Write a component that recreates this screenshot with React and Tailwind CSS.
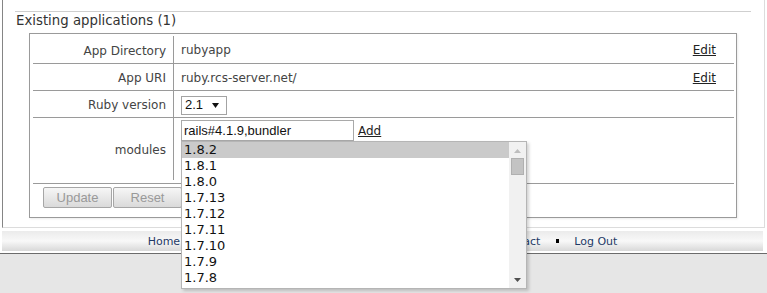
import React from "react";

const versions = ["1.8.2", "1.8.1", "1.8.0", "1.7.13", "1.7.12", "1.7.11", "1.7.10", "1.7.9", "1.7.8"];
const footerLinks = ["Home", "Applications", "Databases", "Help Desk", "Contact", "Log Out"];

function Row({ label, children, className = "", labelClass = "" }) {
  return (
    <div className={"flex border-b border-[#9a9a9a] " + className}>
      <div className={"w-[141px] shrink-0 border-r border-[#9a9a9a] flex items-center justify-end pr-[7px] pt-[2px] " + labelClass}>
        {label}
      </div>
      <div className="flex-1 flex items-center pl-[7px] pr-[18px] pt-[2px]">{children}</div>
    </div>
  );
}

function VersionList() {
  return (
    <div className="absolute left-0 top-[21px] z-10 w-[346px] h-[148px] bg-white border border-[#b5b5b5] shadow-[2px_2px_3px_rgba(0,0,0,0.18)] flex">
      <div className="flex-1 overflow-hidden font-['DejaVu_Sans',sans-serif] text-[13px] leading-[16px] text-[#111]">
        {versions.map((v, i) => (
          <div key={v} className={"h-[16px] pl-[2px] " + (i === 0 ? "bg-[#cacaca]" : "")}>
            {v}
          </div>
        ))}
      </div>
      <div className="w-[17px] shrink-0 bg-[#f1f1f1] flex flex-col items-center">
        <svg width="7" height="4" viewBox="0 0 7 4" className="mt-[7px]">
          <path d="M0 4 L3.5 0 L7 4 Z" fill="#bdbdbd" />
        </svg>
        <div className="mt-[5px] w-[13px] h-[17px] bg-[#c3c3c3] border border-[#b0b0b0]" />
        <div className="flex-1" />
        <svg width="7" height="4" viewBox="0 0 7 4" className="mb-[6px]">
          <path d="M0 0 L7 0 L3.5 4 Z" fill="#505050" />
        </svg>
      </div>
    </div>
  );
}

export default function App() {
  return (
    <div className="w-[767px] h-[293px] bg-white flex flex-col overflow-hidden font-['DejaVu_Sans',sans-serif] text-[12px] text-[#444]">
      <div className="ml-[2px] w-[763px] h-[228px] shrink-0 border-l border-l-[#858585] border-r border-r-[#dcdcdc] border-b border-b-[#dcdcdc]">
        <div className="mt-[11px] ml-[12px] w-[736px] border-t border-[#cfcfcf] pt-[1px] pl-[1px] text-[13.3px] leading-[16px] text-[#333]">
          Existing applications (1)
        </div>

        <div className="mt-[4px] ml-[26px] w-[708px] h-[185px] border border-[#9a9a9a] shadow-[1px_1px_2px_rgba(0,0,0,0.08)] pl-[3px] pr-[2px] flex flex-col">
          <Row label="App Directory" className="h-[30px]" labelClass="mt-[2px]">
            <span className="flex-1">rubyapp</span>
            <a className="underline text-[#222]">Edit</a>
          </Row>
          <Row label="App URI" className="h-[27px]">
            <span className="flex-1">ruby.rcs-server.net/</span>
            <a className="underline text-[#222]">Edit</a>
          </Row>
          <Row label="Ruby version" className="h-[27px]">
            <div className="w-[46px] h-[19px] border border-[#a3a3a3] bg-white flex items-center pl-[3px] font-['Liberation_Sans',sans-serif] text-[13px] text-[#111]">
              <span>2.1</span>
              <svg width="7" height="5" viewBox="0 0 7 5" className="ml-[9px]">
                <path d="M0 0 L7 0 L3.5 5 Z" fill="#111" />
              </svg>
            </div>
          </Row>
          <div className="flex border-b border-[#9a9a9a] h-[66px]">
            <div className="w-[141px] shrink-0 border-r border-[#9a9a9a] mb-[3px] flex items-center justify-end pr-[7px] pt-[2px]">
              modules
            </div>
            <div className="flex-1 pl-[7px] pt-[2px]">
              <div className="relative flex items-center">
                <div className="w-[173px] h-[21px] border border-[#a9a9a9] bg-white pl-[2px] flex items-center font-['Liberation_Sans',sans-serif] text-[13px] text-[#111]">
                  rails#4.1.9,bundler
                </div>
                <a className="ml-[4px] underline text-[#222]">Add</a>
                <VersionList />
              </div>
            </div>
          </div>
          <div className="flex pl-[10px] pt-[3px]">
            <button className="w-[69px] h-[21px] border border-[#a6a6a6] rounded-[2px] bg-gradient-to-b from-[#f6f6f6] to-[#dadada] text-[#999] font-['Liberation_Sans',sans-serif] text-[13px] leading-none">
              Update
            </button>
            <button className="ml-[1px] w-[69px] h-[21px] border border-[#a6a6a6] rounded-[2px] bg-gradient-to-b from-[#f6f6f6] to-[#dadada] text-[#999] font-['Liberation_Sans',sans-serif] text-[13px] leading-none">
              Reset
            </button>
          </div>
        </div>
      </div>

      <div className="mt-[3px] ml-[2px] w-[761px] h-[20px] shrink-0 bg-gradient-to-b from-[#ebebeb] via-[#f8f8f8] to-[#d8d8d8] flex items-center justify-center pt-[3px] text-[11px] text-[#1f3a66]">
        {footerLinks.map((l, i) => (
          <React.Fragment key={l}>
            {i > 0 && <span className="mr-[15px] ml-[16px] mb-[4px] w-[3px] h-[4px] bg-black" />}
            <a>{l}</a>
          </React.Fragment>
        ))}
      </div>

      <div className="mt-[2px] flex-1 border-t border-[#6b6b6b] bg-[#e6e6e6]" />
    </div>
  );
}
